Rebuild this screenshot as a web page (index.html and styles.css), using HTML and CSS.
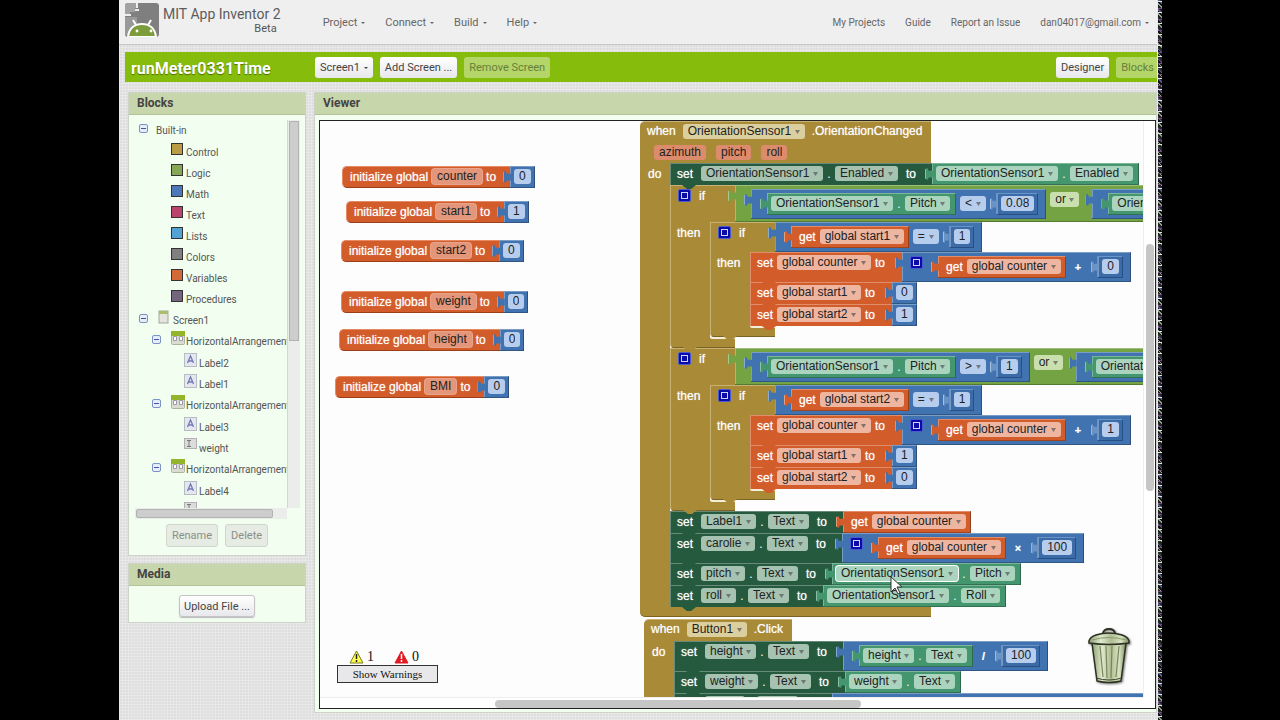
FILE: index.html
```
<!DOCTYPE html>
<html lang="en">
<head>
<meta charset="utf-8">
<title>MIT App Inventor 2</title>
<link rel="stylesheet" href="styles.css">
</head>
<body>
<div class="app">
  <header class="top">
    <svg class="logo" viewBox="0 0 34 34" aria-hidden="true">
      <rect width="34" height="34" rx="3" fill="#7f7f7f"/>
      <path d="M0 3q0-3 3-3h9v5h-2v4H5v3H0z" fill="#a2a2a2"/>
      <path d="M12 0v5M10 7H14M0 12h6" fill="none" stroke="#eee" stroke-width="2"/>
      <path d="M0 14h12v6L4 32H0z" fill="#999"/>
      <path d="M3 34C4 25 10 21 17 21s13 4 14 13z" fill="#7d9c3c" stroke="#fff" stroke-width="2"/>
      <path d="M8 17l3 5M26 17l-3 5" stroke="#fff" stroke-width="2"/>
      <circle cx="12" cy="28" r="1.400" fill="#fff"/><circle cx="26" cy="28" r="1.400" fill="#fff"/>
    </svg>
    <div class="brand"><span class="brand-name">MIT App Inventor 2</span><span class="brand-sub">Beta</span></div>
    <nav class="menu">
      <button class="caret">Project</button><button class="caret">Connect</button><button class="caret">Build</button><button class="caret">Help</button>
    </nav>
    <nav class="links">
      <a href="#">My Projects</a><a href="#">Guide</a><a href="#">Report an Issue</a><button class="caret">dan04017@gmail.com</button>
    </nav>
  </header>
  <div class="project-bar">
    <h1>runMeter0331Time</h1>
    <div class="screens">
      <button class="btn caret">Screen1</button><button class="btn">Add Screen ...</button><button class="btn faded" disabled>Remove Screen</button>
    </div>
    <div class="modes"><button class="btn">Designer</button><button class="btn faded" disabled>Blocks</button></div>
  </div>
  <div class="columns">
    <aside class="side">
      <section class="panel">
        <h2>Blocks</h2>
        <div class="tree-box">
          <ul class="tree" id="tree"></ul>
          <div class="track-v"><div class="thumb"></div></div>
          <div class="track-h"><div class="thumb"></div></div>
        </div>
        <div class="actions"><button class="btn off" disabled>Rename</button><button class="btn off" disabled>Delete</button></div>
      </section>
      <section class="panel">
        <h2>Media</h2>
        <div class="upload"><button class="btn raised">Upload File ...</button></div>
      </section>
    </aside>
    <main class="panel viewer">
      <h2>Viewer</h2>
      <div class="frame">
        <div class="workspace" id="workspace">
          <div class="warnings">
            <div class="counts">
              <svg width="15" height="14" viewBox="0 0 15 14" aria-hidden="true"><path d="M7.500 1L14 13H1z" fill="#ffff4a" stroke="#77772a" stroke-linejoin="round"/><path d="M7.500 4v5M7.500 10v2" stroke="#222" stroke-width="1.500"/></svg><span>1</span>
              <svg width="15" height="14" viewBox="0 0 15 14" aria-hidden="true"><path d="M7.500 1L14 13H1z" fill="#e01b24" stroke="#e01b24" stroke-linejoin="round"/><path d="M7.500 4v5M7.500 10v2" stroke="#fff" stroke-width="1.500"/></svg><span>0</span>
            </div>
            <button>Show Warnings</button>
          </div>
          <svg class="trash" viewBox="0 0 48 58" aria-hidden="true">
            <defs><linearGradient id="tin"><stop offset="0" stop-color="#8f9f74"/><stop offset=".3" stop-color="#dfe9cc"/><stop offset=".55" stop-color="#aebd92"/><stop offset=".8" stop-color="#d8e3c2"/><stop offset="1" stop-color="#7f8f64"/></linearGradient></defs>
            <path d="M6 15h34l-5 38q-12 3-24 0z" fill="url(#tin)" stroke="#2c3120" stroke-width="1.500"/>
            <path d="M14 18l3 31M20 18l1 32M26 18l-1 32M33 18l-3 31" stroke="#77865c" stroke-width="1.200" fill="none"/>
            <path d="M10 50q13 4 26 0" stroke="#3b422b" fill="none"/>
            <path d="M3 13q1-4 7-6 13-4 26 0 6 2 7 6v2q-20 3-40 0z" fill="url(#tin)" stroke="#2c3120" stroke-width="1.500"/>
            <path d="M17 5q1-4 6-4t6 4" fill="none" stroke="#2c3120" stroke-width="2"/>
            <path d="M6 12q17-5 34 0" fill="none" stroke="#8b9a70"/>
          </svg>
          <svg class="pointer" viewBox="0 0 13 20" aria-hidden="true"><path d="M1 1v15l4-4 3 6 2-1-3-6h5z" fill="#fff" stroke="#333"/></svg>
        </div>
        <div class="ws-v"><div class="thumb"></div></div>
        <div class="ws-h"><div class="thumb"></div></div>
      </div>
    </main>
  </div>
  <div class="noise"></div>
</div>
<script src="blocks.js"></script>
</body>
</html>
```
FILE: styles.css
```
*, *::before, *::after { box-sizing: border-box; }
body { margin: 0; background: #000; font-family: Roboto, "Liberation Sans", sans-serif; font-size: 11px; color: #555; overflow: hidden; }
button, select, input { font: inherit; color: inherit; margin: 0; padding: 0; border: 0; background: none; }
h1, h2, ul { margin: 0; padding: 0; list-style: none; }
a { color: inherit; text-decoration: none; }

.app {
  position: relative; margin: 0 118px 0 119px; height: 100vh; padding-right: 5px;
  display: flex; flex-direction: column; overflow: hidden;
  background: repeating-linear-gradient(0deg, rgba(255,255,255,.25) 0 1px, transparent 1px 3px), repeating-linear-gradient(90deg, rgba(255,255,255,.25) 0 1px, transparent 1px 3px), #dedede;
}
.noise {
  position: absolute; top: 0; right: 0; bottom: 0; width: 4px;
  background: repeating-linear-gradient(0deg, transparent 0 3px, #e6e6e6 3px 4px, transparent 4px 7px, #7a4b86 7px 8px, transparent 8px 11px), repeating-linear-gradient(45deg, #222 0 2px, #8fa08f 2px 3px, #111 3px 5px, #5a5a94 5px 6px, #333 6px 7px);
}

.top { flex: none; height: 45px; display: flex; align-items: center; background: #efefef; border-bottom: 1px solid #c6c6c6; padding: 0 8px 0 6px; }
.logo { flex: none; width: 34px; height: 34px; margin-top: -4px; }
.brand { flex: none; display: flex; flex-direction: column; align-items: flex-end; margin: -4px 42px 0 4px; white-space: nowrap; }
.brand-name { font-size: 14px; line-height: 18px; color: #5c5c5c; }
.brand-sub { font-size: 11px; line-height: 12px; padding-right: 4px; }
.menu, .links { display: flex; align-items: center; gap: 20px; color: #666; }
.links { margin-left: auto; font-size: 10px; }
.caret::after { content: ""; display: inline-block; margin-left: 4px; vertical-align: 2px; border: 2px solid transparent; border-top-color: currentColor; border-bottom: 0; }

.project-bar { flex: none; margin: 7px 0 0 6px; height: 30px; background: #86bc0c; display: flex; align-items: center; padding-left: 6px; overflow: hidden; }
h1 { width: 184px; font-size: 16px; line-height: 20px; color: #fff; text-shadow: 0 1px 1px #4d6f00; padding-top: 4px; }
.screens { display: flex; gap: 7px; }
.modes { display: flex; gap: 7px; margin: 0 -2px 0 auto; }
.btn { height: 21px; padding: 0 5px; border-radius: 3px; background: linear-gradient(#fff, #e8e8ec); color: #444; white-space: nowrap; }
.btn.faded { background: #b4d669; color: #66803a; }
.btn.off { height: 23px; background: #e6ebe3; border: 1px solid #cfd6cc; color: #8a8f88; }
.btn.raised { height: 22px; padding: 0 4px; border: 1px solid #c4c4c4; box-shadow: 0 1px 1px #bbb; }

.columns { flex: 1; min-height: 0; display: flex; gap: 8px; margin: 10px 0 7px 9px; }
.side { width: 178px; display: flex; flex-direction: column; gap: 7px; }
.panel { background: #f1fef0; border: 1px solid #cdd3c8; }
h2 { height: 22px; padding-left: 8px; font-size: 12px; line-height: 21px; color: #444; background: #c8d6ac; border-bottom: 1px solid #b4c29a; }
.tree-box { margin: 5px 5px 0 6px; display: grid; grid-template: 388px 11px / 1fr 13px; }
.tree { overflow: hidden; white-space: nowrap; padding-left: 3px; font-size: 10px; }
.tree li { height: 21px; display: flex; align-items: flex-start; }
.tree li span { line-height: 21px; }
.tree .first, .tree .arr { height: 22px; }
.tree .toggle { flex: none; width: 9px; height: 9px; margin: 4px 8px 0 1px; border: 1px solid #7b93c4; border-radius: 2px; background: linear-gradient(#3a5ba0, #3a5ba0) center / 5px 1px no-repeat #e6edf8; }
.tree .icon { flex: none; width: 14px; height: 14px; margin: 0 1px 0 0; }
.tree .toggle + .icon { margin-left: 2px; }
.swatch { flex: none; border: 1px solid #333; width: 12px; height: 12px; margin: 1px 3px 0 0; }
.track-v { background: #ebedeb; border-left: 1px solid #d4d8d4; padding: 1px; }
.track-h { background: #ebedeb; padding: 1px; }
.thumb { background: #cdcdcd; border: 1px solid #b2b2b2; }
.track-v .thumb { height: 220px; }
.track-h .thumb { width: 137px; height: 9px; border-radius: 2px; }
.actions { display: flex; justify-content: center; gap: 7px; padding: 5px 0 8px 0; }
.upload { display: flex; justify-content: center; padding: 9px 0 5px; }

.viewer { flex: 1; min-width: 0; display: flex; flex-direction: column; }
.frame { flex: 1; min-height: 0; margin: 5px 0 3px 4px; border: 1px solid #222; background: #fff; display: grid; grid-template: minmax(0, 1fr) 11px / minmax(0, 1fr) 12px; }
.ws-v { grid-area: 1 / 2; border-left: 1px solid #eee; padding: 123px 1px 0 2px; }
.ws-v .thumb { height: 247px; border: 0; border-radius: 4px; background: #c6c6c6; }
.ws-h { grid-area: 2 / 1; border-top: 1px solid #eee; padding: 2px 0 0 175px; }
.ws-h .thumb { width: 366px; height: 8px; border: 0; border-radius: 4px; background: #c6c6c6; }
.workspace { position: relative; overflow: hidden; background: #fefdfe; font-family: "Liberation Sans", Arial, sans-serif; font-size: 12px; color: #fff; }

.placed { position: absolute; white-space: nowrap; }
.warnings { position: absolute; left: 17px; bottom: 14px; color: #111; font-family: "Liberation Serif", serif; z-index: 5; }
.counts { display: flex; align-items: center; padding-left: 12px; font-size: 14px; line-height: 17px; }
.counts span { width: 28px; padding-left: 3px; }
.counts span + svg { margin-left: 2px; }
.warnings button { width: 101px; height: 18px; border: 1px solid #333; background: #e8e8ea; font-size: 11px; }
.trash { position: absolute; right: 9px; bottom: 11px; width: 48px; height: 58px; filter: drop-shadow(1px 1px 1px #777); z-index: 5; }
.pointer { position: absolute; left: 570px; top: 455px; width: 13px; height: 20px; z-index: 6; }

/* block colours */
.control { background: #a98a37; --field: #dccf9f; }
.logic { background: #74a344; --field: #cadfae; }
.math { background: #4173b0; --field: #b7cdee; }
.variable { background: #d35c2b; --field: #eeb5a1; }
.getter { background: #43966e; --field: #abd4bf; }
.setter { background: #265a3e; --field: #a5c3b0; }

/* blocks */
.row { display: flex; align-items: flex-start; }
.stack { display: flex; flex-direction: column; align-items: flex-start; }
.word { flex: none; line-height: 22px; text-shadow: 0 0 1px rgba(255,255,255,.7); }
.field, .name {
  flex: none; appearance: none; height: 15px; margin: 3px 0 4px; padding: 0 13px 0 5px; border-radius: 3px; color: #222; line-height: 15px;
  background: url("data:image/svg+xml,%3Csvg xmlns='http://www.w3.org/2000/svg' width='5' height='4'%3E%3Cpath d='M0 0h5L2.500 4z' fill='%23555' fill-opacity='.7'/%3E%3C/svg%3E") right 5px center no-repeat var(--field);
}
.name { padding: 0 5px; field-sizing: content; background: var(--field); }
.hover { box-shadow: 0 0 0 1px #fff; }
.dot { flex: none; width: 12px; text-align: center; line-height: 22px; }
.value { position: relative; display: flex; align-items: flex-start; flex: none; height: 22px; border-top: 1px solid rgba(255,255,255,.3); border-bottom: 1px solid rgba(0,0,0,.25); border-right: 1px solid rgba(0,0,0,.3); box-shadow: inset 1px 0 rgba(255,255,255,.3); }
.value > .field, .value > .name { margin-top: 2px; }
.value > .word, .value > .dot { line-height: 20px; }
.value::before { content: ""; position: absolute; left: -7px; top: 4px; width: 8px; height: 12px; background: inherit; clip-path: polygon(0 10%, 30% 0, 45% 22%, 100% 22%, 100% 80%, 45% 80%, 35% 100%, 0 88%); box-shadow: inset 1px 0 rgba(255,255,255,.4); }
.number { padding: 0 3px 0 4px; }
.value .number { margin-right: 7px; }
.math .number { background: #3c6ca8; border: 1px solid #6a93c6; border-bottom-color: #284f83; border-right-color: #284f83; }
.math .number::before { background: #6a93c6; left: -7px; width: 6px; }
.component { padding: 0 5px 0 4px; }
.lookup { padding: 0 4px 0 8px; gap: 4px; }
.operation { height: 30px; padding-left: 16px; }
.operation > .value { margin-top: 3px; }
.operation > .field { margin: 6px 10px 0 4px; }
.operation > .word { margin-top: 4px; padding: 0 16px 0 9px; font-size: 11px; font-weight: bold; }
.has-mutator { padding-left: 8px; }
.mutator { flex: none; width: 13px; height: 13px; margin: 3px 0; border: 1px solid #4a5ad0; border-radius: 2px; background: #0b0ba8; padding: 2px; }
.mutator::before { content: ""; display: block; width: 7px; height: 7px; border: 1px solid #cfd4ff; }
.has-mutator > .mutator { margin-right: 15px; }
.either { height: 37px; padding-left: 16px; }
.either > .value { margin-top: 3px; }
.either > .field { margin: 6px 13px 0 4px; }

.statement { position: relative; display: flex; align-items: flex-start; height: 22px; padding-left: 7px; border-top: 1px solid rgba(255,255,255,.3); box-shadow: inset 1px 0 rgba(255,255,255,.3); }
.statement.tall { height: 30px; }
.statement > .word, .statement > .dot { line-height: 20px; }
.statement > .field { margin-top: 2px; }
.statement > .value { margin-top: -1px; }
.statement::after, .foot::after { content: ""; position: absolute; z-index: 2; left: 12px; top: 100%; width: 14px; height: 4px; background: inherit; clip-path: polygon(0 0, 100% 0, 65% 100%, 35% 100%); }
.prop > .word:first-child { margin-right: 8px; }
.prop > .field + .word { margin: 0 16px 0 8px; }
.var > .word:first-child { margin-right: 4px; }
.var > .field + .word { margin: 0 17px 0 4px; }

.global { border-radius: 5px 0 0 5px; padding-left: 7px; display: flex; height: 22px; border-top: 1px solid #e58a63; border-left: 1px solid #e58a63; border-bottom: 1px solid #9b3f19; }
.global > .word { line-height: 20px; }
.global > .name { margin: 2px 4px; background: #e3967a; box-shadow: 0 0 0 1px #eaa48b; height: 15px; }
.global > .value { margin: -1px 0 0 14px; }

.if-head { width: 65px; padding-left: 7px; display: flex; gap: 8px; align-self: stretch; border-top: 1px solid #c9b173; border-left: 1px solid #c9b173; }
.if-head .word { line-height: 20px; }
.spine { flex: none; align-self: stretch; width: 40px; padding-left: 6px; border-left: 1px solid #c9b173; }
.foot { position: relative; width: 65px; height: 11px; border-left: 1px solid #c9b173; border-bottom: 1px solid #7a6323; border-radius: 0 0 0 4px; }
.foot::before { content: ""; position: absolute; left: 39px; right: 0; top: 0; height: 2px; background: #f4edd8; border-radius: 0 0 0 4px; }
.event { display: grid; grid-template-columns: max-content; }
.event > .row { width: 0; }
.event-head { height: 20px; display: flex; gap: 7px; padding: 0 9px 0 7px; border-top: 1px solid #c9b173; border-radius: 5px 0 0 0; }
.event-head.lone { height: 22px; }
.event-head .word { line-height: 19px; }
.event-head .field { margin-top: 2px; }
.params { height: 22px; padding: 4px 0 0 14px; display: flex; gap: 10px; }
.params .name { margin: 0; background: #dc8c6c; }
.event > .row > .spine { width: 30px; padding-left: 8px; border: 0; }
.event-foot { height: 10px; border-bottom: 1px solid #7a6323; border-radius: 0 0 0 5px; }
```
FILE: blocks.js
```
const word = t => `<span class="word">${t}</span>`;
const pick = (t, cls = '') => `<select class="field ${cls}" aria-label="${t}"><option>${t}</option></select>`;
const name = t => `<input class="name" value="${t}" aria-label="${t}">`;
const dot = '<span class="dot">.</span>';
const mutator = '<span class="mutator"></span>';

const num = n => `<div class="value number math">${name(n)}</div>`;
const get = v => `<div class="value lookup variable">${word('get')}${pick(v)}</div>`;
const prop = (c, p, cls) => `<div class="value component getter">${pick(c, cls)}${dot}${pick(p)}</div>`;
const compare = (a, op, b) => `<div class="value operation math">${a}${pick(op)}${b}</div>`;
const arith = (a, op, b) => `<div class="value operation math">${a}${word(op)}${b}</div>`;
const sum = (a, op, b) => `<div class="value operation has-mutator math">${mutator}${a}${word(op)}${b}</div>`;
const either = (a, b) => `<div class="value either logic">${a}${pick('or')}${b}</div>`;

const setVar = (v, val, tall = '') => `<div class="statement var variable ${tall}">${word('set')}${pick(v)}${word('to')}${val}</div>`;
const setProp = (c, p, val, tall = '') => `<div class="statement prop setter ${tall}">${word('set')}${pick(c)}${dot}${pick(p)}${word('to')}${val}</div>`;
const when = (test, body) => `<div class="stack">
  <div class="row"><div class="if-head control">${mutator}${word('if')}</div>${test}</div>
  <div class="row"><div class="spine control">${word('then')}</div><div class="stack">${body}</div></div>
  <div class="foot control"></div></div>`;
const event = (comp, action, params, body) => `<div class="event">
  <div class="event-head control ${params.length ? '' : 'lone'}">${word('when')}${pick(comp)}${word('.' + action)}</div>
  ${params.length ? `<div class="params control">${params.map(name).join('')}</div>` : ''}
  <div class="row"><div class="spine control">${word('do')}</div><div class="stack">${body}</div></div>
  <div class="event-foot control"></div></div>`;
const global = (n, v) => `<div class="global variable">${word('initialize global')}${name(n)}${word('to')}${num(v)}</div>`;

const sensor = 'OrientationSensor1';
const step = (op, limit, flag, add, s1, s2) => when(
  either(compare(prop(sensor, 'Pitch'), op, num(limit)), compare(prop(sensor, 'Pitch'), op, num(limit))),
  when(compare(get('global ' + flag), '=', num('1')),
    setVar('global counter', sum(get('global counter'), '+', num(add)), 'tall') +
    setVar('global start1', num(s1)) + setVar('global start2', num(s2))));

const placed = [
  [22, 45, global('counter', '0')],
  [26, 80, global('start1', '1')],
  [21, 119, global('start2', '0')],
  [21, 170, global('weight', '0')],
  [19, 208, global('height', '0')],
  [15, 255, global('BMI', '0')],
  [320, 0, event(sensor, 'OrientationChanged', ['azimuth', 'pitch', 'roll'],
    setProp(sensor, 'Enabled', prop(sensor, 'Enabled')) +
    step('&lt;', '0.08', 'start1', '0', '0', '1') +
    step('&gt;', '1', 'start2', '1', '1', '0') +
    setProp('Label1', 'Text', get('global counter')) +
    setProp('carolie', 'Text', sum(get('global counter'), '×', num('100')), 'tall') +
    setProp('pitch', 'Text', prop(sensor, 'Pitch', 'hover')) +
    setProp('roll', 'Text', prop(sensor, 'Roll')))],
  [324, 498, event('Button1', 'Click', [],
    setProp('height', 'Text', arith(prop('height', 'Text'), '/', num('100')), 'tall') +
    setProp('weight', 'Text', prop('weight', 'Text')) +
    setProp('BMI', 'Text', arith(arith(prop('weight', 'Text'), '/', prop('height', 'Text')), '/', prop('height', 'Text')), 'tall'))],
];
document.getElementById('workspace').insertAdjacentHTML('afterbegin',
  placed.map(([x, y, html]) => `<div class="placed" style="left:${x}px;top:${y}px">${html}</div>`).join(''));

const icons = {
  screen: '<rect x="1" y="1" width="9" height="12" fill="#e4e4dc" stroke="#a5a59c"/><path d="M1 1h9v3H1z" fill="#a9bd6c"/>',
  arr: '<rect x=".5" y=".5" width="13" height="13" rx="1" fill="#d9dccf" stroke="#adb39c"/><path d="M0 0h14v5H0z" fill="#93b52c"/><path d="M2.500 5.500h3v4h-3zM8.500 5.500h3v4h-3z" fill="#fff" stroke="#99a"/>',
  label: '<rect x=".5" y=".5" width="12" height="13" fill="#e4e8ee" stroke="#b8bcc4"/><path d="M3.500 10L6.500 3l3 7M4.500 8h4" fill="none" stroke="#7079b5" stroke-width="1.300"/>',
  text: '<rect x=".5" y=".5" width="12" height="10" fill="#dcdcdc" stroke="#b0b0b0"/><path d="M3 2.500h4M5 2.500v6M3 8.500h4" stroke="#777"/>',
};
const item = (indent, kind, label, toggle = false, cls = '') => `<li class="${cls}" style="padding-left:${indent}px">${toggle ? '<button class="toggle" aria-label="Collapse"></button>' : ''}${
  kind[0] === '#' ? `<i class="swatch" style="background:${kind}"></i>` : icons[kind] ? `<svg class="icon" viewBox="0 0 14 14">${icons[kind]}</svg>` : ''}<span>${label}</span></li>`;
const drawers = [['Control', '#b99a45'], ['Logic', '#86a755'], ['Math', '#4a78b8'], ['Text', '#bb446c'], ['Lists', '#52a3d4'], ['Colors', '#808080'], ['Variables', '#d16a38'], ['Procedures', '#74647c']];
document.getElementById('tree').innerHTML =
  item(0, 'none', 'Built-in', true, 'first') +
  drawers.map(([t, c]) => item(33, c, t)).join('') +
  item(0, 'screen', 'Screen1', true) +
  item(13, 'arr', 'HorizontalArrangement1', true, 'arr') + item(46, 'label', 'Label2') + item(46, 'label', 'Label1') +
  item(13, 'arr', 'HorizontalArrangement2', true, 'arr') + item(46, 'label', 'Label3') + item(46, 'text', 'weight') +
  item(13, 'arr', 'HorizontalArrangement3', true, 'arr') + item(46, 'label', 'Label4') + item(46, 'text', 'height');
```
